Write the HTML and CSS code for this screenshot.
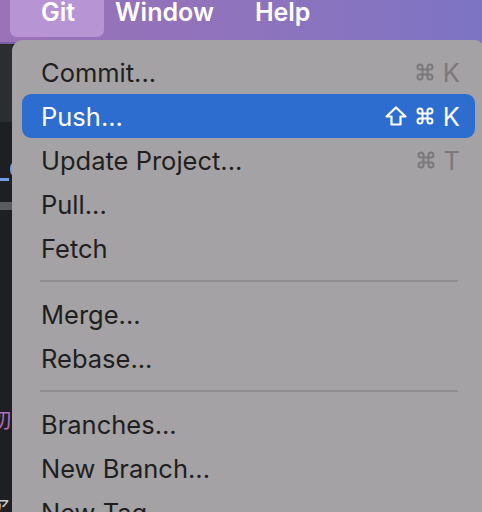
FILE: index.html
```html
<!DOCTYPE html>
<html lang="en">
<head>
<meta charset="utf-8">
<title>Git menu</title>
<link rel="stylesheet" href="styles.css">
</head>
<body>
<div class="screen">
  <header class="menubar">
    <span class="mb-item mb-git">Git</span>
    <span class="mb-item mb-window">Window</span>
    <span class="mb-item mb-help">Help</span>
  </header>
  <div class="below">
    <aside class="sidebar">
      <div class="sb-top"></div>
      <div class="sb-gap0"></div>
      <div class="sb-arc"></div>
      <div class="sb-line"></div>
      <div class="sb-gap1"></div>
      <div class="sb-bar"></div>
      <div class="sb-gap2"></div>
      <div class="sb-kanji">切</div>
      <div class="sb-gap3"></div>
      <div class="sb-kana">ア</div>
    </aside>
    <nav class="menu">
      <div class="item"><span class="label">Commit...</span><span class="keys"><svg class="cmd" viewBox="0 0 24 24"><path d="M15 6v12a3 3 0 1 0 3-3H6a3 3 0 1 0 3 3V6a3 3 0 1 0-3 3h12a3 3 0 1 0-3-3"/></svg><span class="key">K</span></span></div>
      <div class="item selected"><span class="label">Push...</span><span class="keys"><svg class="shift" viewBox="0 0 22 20"><path d="M11 1.5 L20.5 10.5 H15.5 V18.5 H6.5 V10.5 H1.5 Z"/></svg><svg class="cmd" viewBox="0 0 24 24"><path d="M15 6v12a3 3 0 1 0 3-3H6a3 3 0 1 0 3 3V6a3 3 0 1 0-3 3h12a3 3 0 1 0-3-3"/></svg><span class="key">K</span></span></div>
      <div class="item"><span class="label">Update Project...</span><span class="keys"><svg class="cmd" viewBox="0 0 24 24"><path d="M15 6v12a3 3 0 1 0 3-3H6a3 3 0 1 0 3 3V6a3 3 0 1 0-3 3h12a3 3 0 1 0-3-3"/></svg><span class="key">T</span></span></div>
      <div class="item"><span class="label">Pull...</span></div>
      <div class="item"><span class="label">Fetch</span></div>
      <div class="sep"></div>
      <div class="item"><span class="label">Merge...</span></div>
      <div class="item"><span class="label">Rebase...</span></div>
      <div class="sep"></div>
      <div class="item"><span class="label">Branches...</span></div>
      <div class="item"><span class="label">New Branch...</span></div>
      <div class="item"><span class="label">New Tag...</span></div>
    </nav>
  </div>
</div>
</body>
</html>
```

FILE: styles.css
```css
* { box-sizing: border-box; }
html, body { margin: 0; padding: 0; }
body {
  width: 482px;
  height: 512px;
  overflow: hidden;
  font-family: Inter, "Noto Sans", "Noto Sans CJK JP", sans-serif;
  background: #1e1f22;
}
.screen {
  width: 482px;
  height: 512px;
  overflow: hidden;
  display: flex;
  flex-direction: column;
}
.menubar {
  height: 44px;
  flex: none;
  display: flex;
  align-items: flex-start;
  padding-left: 10px;
  background: linear-gradient(90deg, #9b72b8 0%, #8d73bd 55%, #7d74c3 100%);
  border-bottom: 2px solid #7a62a6;
}
.mb-item {
  height: 37px;
  display: flex;
  align-items: flex-start;
  color: #ffffff;
  font-size: 25px;
  line-height: 25px;
  font-weight: 600;
}
.mb-git {
  padding: 0 29px 0 31px;
  background: #b795d5;
  border-radius: 0 0 7px 7px;
}
.mb-window { padding: 0 30px 0 11px; }
.mb-help { padding: 0 12px 0 11px; }
.below {
  flex: 1;
  display: flex;
  align-items: flex-start;
  min-height: 0;
}
.sidebar {
  width: 12px;
  flex: none;
  align-self: stretch;
  background: #1e1f22;
  display: flex;
  flex-direction: column;
  overflow: hidden;
}
.sb-top { height: 78px; background: #2b2d30; flex: none; }
.sb-gap0 { height: 38px; flex: none; }
.sb-arc {
  height: 18px;
  width: 8px;
  margin-left: 10px;
  flex: none;
  border-left: 2px solid #6fa0e6;
  border-radius: 8px 0 0 8px;
}
.sb-line {
  height: 3px;
  width: 9px;
  background: #6fa0e6;
  flex: none;
}
.sb-gap1 { height: 21px; flex: none; }
.sb-bar { height: 8px; background: #5b5c60; flex: none; }
.sb-gap2 { height: 198px; flex: none; }
.sb-kanji {
  height: 24px;
  flex: none;
  font-size: 20px;
  line-height: 24px;
  color: #b26fbf;
  margin-left: -9px;
  font-family: "Noto Sans CJK JP", sans-serif;
}
.sb-gap3 { height: 64px; flex: none; }
.sb-kana {
  font-size: 20px;
  line-height: 22px;
  color: #c8c8c8;
  margin-left: -10px;
  font-family: "Noto Sans CJK JP", sans-serif;
}
.menu {
  width: 473px;
  flex: none;
  margin-top: -4px;
  position: relative;
  z-index: 1;
  background: #a4a2a4;
  border-radius: 11px 11px 0 0;
  padding: 10px 10px 0;
  display: flex;
  flex-direction: column;
}
.item {
  height: 44px;
  flex: none;
  display: flex;
  align-items: center;
  justify-content: space-between;
  padding: 0 15px 0 19px;
  border-radius: 9px;
  color: #1f1e20;
  font-size: 25.5px;
  font-weight: 400;
}
.label { padding-top: 1px; }
.item.selected {
  background: #2e6dd0;
  color: #ffffff;
}
.keys {
  display: flex;
  align-items: center;
  gap: 8px;
  color: #7b797c;
}
.selected .keys { color: #ffffff; }
.key { font-size: 25.5px; }
.cmd {
  width: 20px;
  height: 20px;
  fill: none;
  stroke: currentColor;
  stroke-width: 2.4;
}
.shift {
  width: 22px;
  height: 20px;
  fill: none;
  stroke: currentColor;
  stroke-width: 2.2;
  stroke-linejoin: round;
}
.sep {
  height: 22px;
  flex: none;
  display: flex;
  align-items: center;
  padding: 0 17px 0 18px;
}
.sep::before {
  content: "";
  display: block;
  width: 100%;
  height: 2px;
  background: #8f8d90;
}
```
